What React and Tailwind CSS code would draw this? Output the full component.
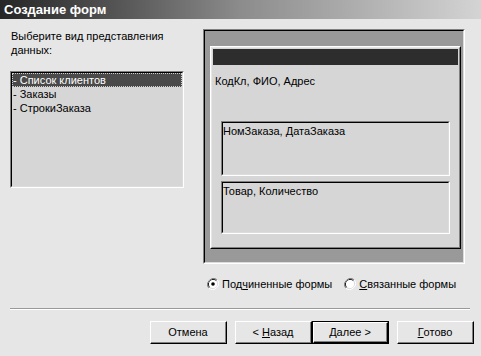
// Wizard dialog: "Создание форм"

const Radio = ({ checked }) => (
    <svg width="12" height="12" viewBox="0 0 12 12" className="shrink-0">
        <path d="M10.2 1.8 A6 6 0 0 0 1.8 10.2" fill="none" stroke="#808080" strokeWidth="1" />
        <path d="M1.8 10.2 A6 6 0 0 0 10.2 1.8" fill="none" stroke="#ffffff" strokeWidth="1" />
        <path d="M9.5 2.5 A5 5 0 0 0 2.5 9.5" fill="none" stroke="#000000" strokeWidth="1" />
        <path d="M2.5 9.5 A5 5 0 0 0 9.5 2.5" fill="none" stroke="#dcdcdc" strokeWidth="1" />
        <circle cx="6" cy="6" r="4" fill="#ffffff" />
        {checked && <circle cx="6" cy="6" r="1.8" fill="#000000" />}
    </svg>
);

const Button = ({ children, isDefault }) => (
    <div className={`w-[77px] h-[23px] ${isDefault ? "border border-black" : ""}`}>
        <div className="h-full border-t border-l border-white border-r border-b border-r-black border-b-black">
            <div className="h-full flex items-center justify-center border-r border-b border-[#808080] bg-[#e6e6e6]">
                {children}
            </div>
        </div>
    </div>
);

const Sunken = ({ className, children }) => (
    <div className={`border-t border-l border-[#808080] border-r border-b border-r-white border-b-white ${className}`}>
        <div className="h-full border-t border-l border-black border-r border-b border-r-[#dcdcdc] border-b-[#dcdcdc]">
            {children}
        </div>
    </div>
);

export default function App() {
    return (
        <div className="w-[481px] h-[356px] bg-[#e6e6e6] flex flex-col font-['Liberation_Sans',Arial,sans-serif] text-[11px] leading-[14px] text-black overflow-hidden">
            {/* Title bar */}
            <div className="h-[19px] shrink-0 flex items-center px-[4px] bg-linear-to-r from-[#262626] via-[#8c8c8c] to-[#d4d4d4] text-white font-bold text-[13px]">
                Создание форм
            </div>

            <div className="flex pl-[10px] pt-[10px]">
                {/* Left column */}
                <div className="w-[174px] flex flex-col">
                    <p className="pl-[1px]">
                        Выберите вид представления
                        <br />
                        данных:
                    </p>
                    <Sunken className="mt-[14px] h-[117px]">
                        <div className="h-full bg-[#d6d6d6] flex flex-col">
                            <div className="h-[14px] bg-[#4a4a4a] text-white px-[1px] outline-1 outline-dotted outline-offset-[-1px] outline-[#cfcfcf]">
                                - Список клиентов
                            </div>
                            <div className="h-[14px] px-[1px]">- Заказы</div>
                            <div className="h-[14px] px-[1px]">- СтрокиЗаказа</div>
                        </div>
                    </Sunken>
                </div>

                {/* Right column */}
                <div className="ml-[19px] w-[262px] flex flex-col">
                    <Sunken className="h-[235px]">
                        <div className="h-full bg-[#999999] pt-[15px] pl-[5px]">
                            <div className="w-[251px] h-[203px] border-t border-l border-white border-r border-b border-r-black border-b-black">
                                <div className="h-full bg-[#d6d6d6] border-t border-l border-[#e6e6e6] border-r border-b border-r-[#808080] border-b-[#808080] flex flex-col">
                                    <div className="mx-[1px] mt-[1px] h-[16px] bg-[#2d2d2d]" />
                                    <div className="mt-[9px] pl-[3px]">КодКл, ФИО, Адрес</div>
                                    <Sunken className="mt-[33px] ml-[9px] w-[229px] h-[55px]">
                                        <div className="h-full bg-[#d6d6d6] pt-[1px]">НомЗаказа, ДатаЗаказа</div>
                                    </Sunken>
                                    <Sunken className="mt-[5px] ml-[9px] w-[229px] h-[53px]">
                                        <div className="h-full bg-[#d6d6d6] pt-[1px]">Товар, Количество</div>
                                    </Sunken>
                                </div>
                            </div>
                        </div>
                    </Sunken>

                    <div className="mt-[13px] h-[14px] flex items-center pl-[4px]">
                        <Radio checked />
                        <span className="ml-[3px]">
                            Под<span className="underline">ч</span>иненные формы
                        </span>
                        <span className="ml-[12px]">
                            <Radio />
                        </span>
                        <span className="ml-[3px]">
                            <span className="underline">С</span>вязанные формы
                        </span>
                    </div>
                </div>
            </div>

            {/* Separator */}
            <div className="mt-[17px] ml-[10px] w-[460px] border-t border-[#999999] border-b border-b-white" />

            {/* Buttons */}
            <div className="mt-[11px] flex pl-[150px]">
                <Button>Отмена</Button>
                <div className="ml-[8px] flex">
                    <Button>
                        <span>
                            &lt; <span className="underline">Н</span>азад
                        </span>
                    </Button>
                    <Button isDefault>
                        <span>
                            <span className="underline">Д</span>алее &gt;
                        </span>
                    </Button>
                </div>
                <div className="ml-[8px]">
                    <Button>
                        <span className="underline">Г</span>отово
                    </Button>
                </div>
            </div>
        </div>
    );
}
